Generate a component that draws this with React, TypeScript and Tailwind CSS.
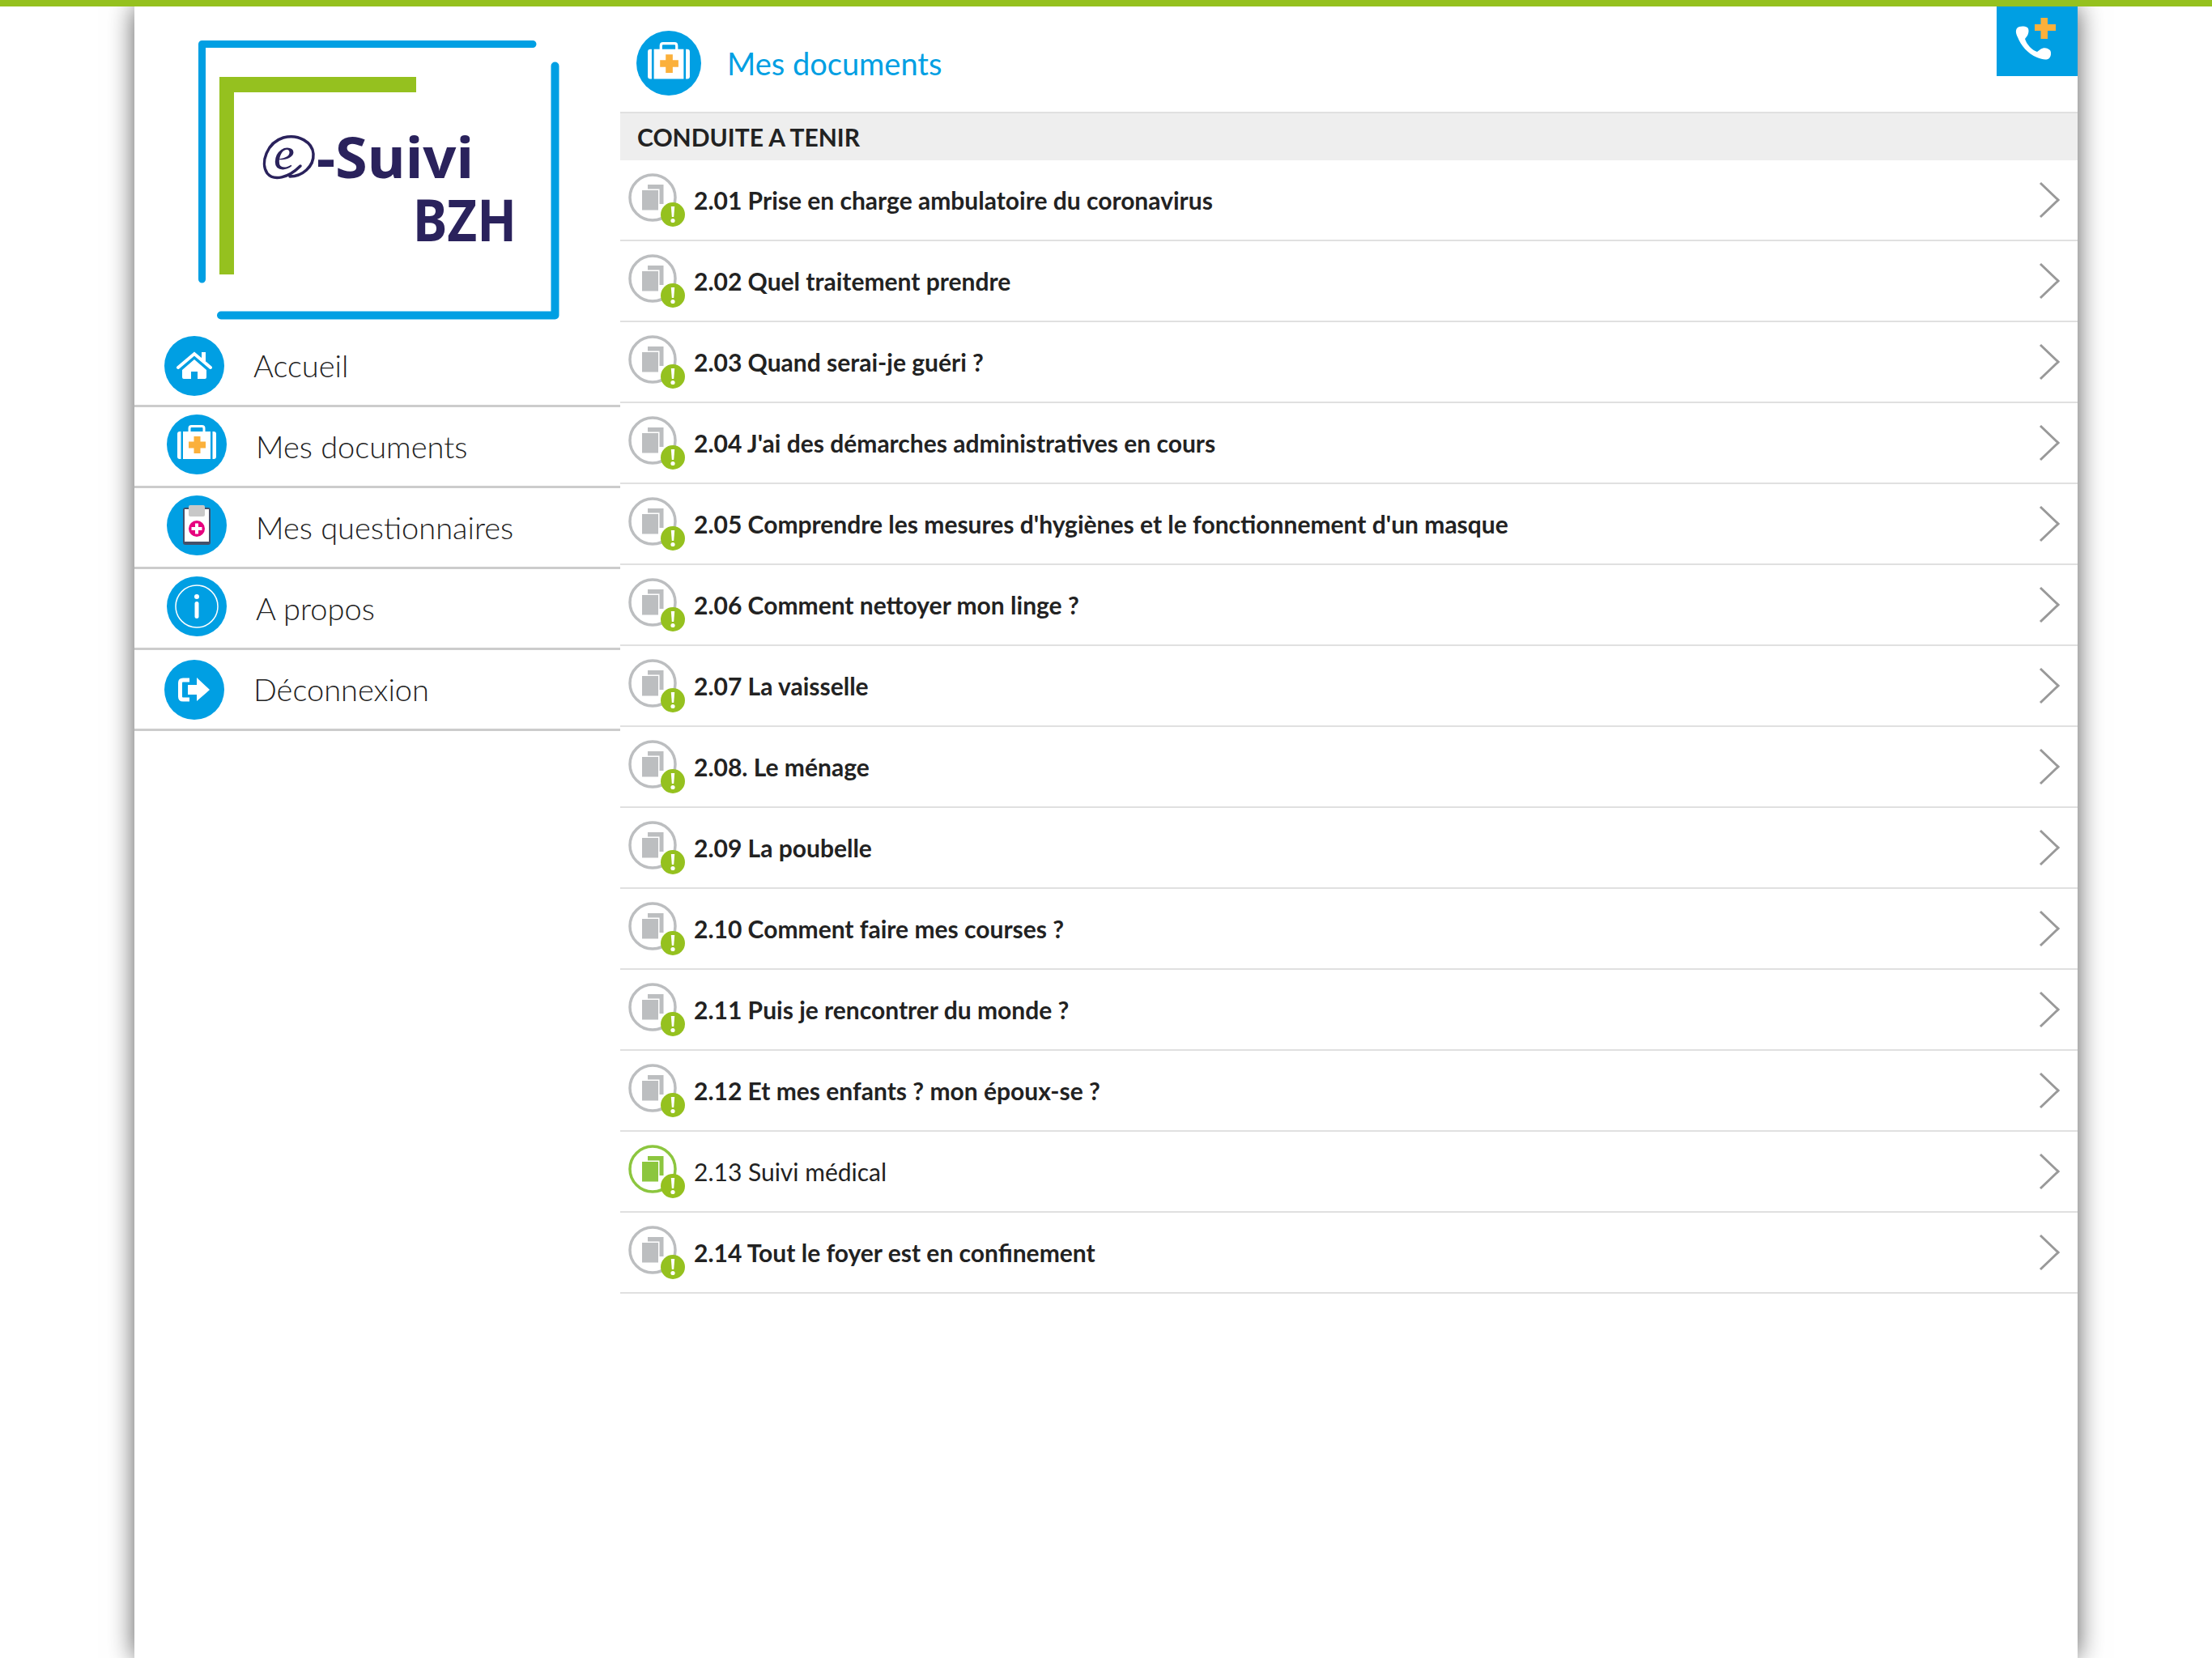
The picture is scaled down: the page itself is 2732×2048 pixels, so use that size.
const blue = "#009fe3";

const docs = [
  "2.01 Prise en charge ambulatoire du coronavirus",
  "2.02 Quel traitement prendre",
  "2.03 Quand serai-je guéri ?",
  "2.04 J'ai des démarches administratives en cours",
  "2.05 Comprendre les mesures d'hygiènes et le fonctionnement d'un masque",
  "2.06 Comment nettoyer mon linge ?",
  "2.07 La vaisselle",
  "2.08. Le ménage",
  "2.09 La poubelle",
  "2.10 Comment faire mes courses ?",
  "2.11 Puis je rencontrer du monde ?",
  "2.12 Et mes enfants ? mon époux-se ?",
  "2.13 Suivi médical",
  "2.14 Tout le foyer est en confinement",
];

function HomeIcon() {
  return (
    <svg viewBox="0 0 74 74" className="w-[74px] h-[74px] shrink-0">
      <circle cx="37" cy="37" r="37" fill={blue} />
      <path d="M17 39 L37 22 L57 39" fill="none" stroke="#fff" strokeWidth="4" strokeLinecap="round" />
      <rect x="46" y="20" width="5" height="11" fill="#fff" />
      <path d="M22 42 L37 29 L52 42 V51 Q52 53 50 53 H41 V44 H33 V53 H24 Q22 53 22 51 Z" fill="#fff" />
    </svg>
  );
}

function KitIcon({ className }: { className: string }) {
  return (
    <svg viewBox="0 0 74 74" className={className}>
      <circle cx="37" cy="37" r="37" fill={blue} />
      <path d="M28 22 V17 Q28 14.5 30.5 14.5 H43.5 Q46 14.5 46 17 V22" fill="none" stroke="#fff" strokeWidth="3" />
      <rect x="20" y="21" width="34" height="34" fill="#fff" />
      <path d="M17.5 21 V55 H16 Q13 55 13 52 V24 Q13 21 16 21 Z" fill="#fff" />
      <path d="M56.5 21 V55 H58 Q61 55 61 52 V24 Q61 21 58 21 Z" fill="#fff" />
      <path d="M33.5 27 H41.5 V33.5 H48 V41.5 H41.5 V48 H33.5 V41.5 H27 V33.5 H33.5 Z" fill="#fbb03b" />
    </svg>
  );
}

function ClipIcon() {
  return (
    <svg viewBox="0 0 74 74" className="w-[74px] h-[74px] shrink-0">
      <circle cx="37" cy="37" r="37" fill={blue} />
      <rect x="20" y="15" width="34" height="46" rx="3" fill="#44506a" />
      <rect x="22" y="17" width="30" height="40" fill="#fff" />
      <rect x="27" y="12" width="20" height="14" rx="2" fill="#c8c8c8" />
      <circle cx="37" cy="41" r="10" fill="#e6007e" />
      <path d="M35 34.5 H39 V39 H43.5 V43 H39 V47.5 H35 V43 H30.5 V39 H35 Z" fill="#fff" />
    </svg>
  );
}

function InfoIcon() {
  return (
    <svg viewBox="0 0 74 74" className="w-[74px] h-[74px] shrink-0">
      <circle cx="37" cy="37" r="37" fill={blue} />
      <circle cx="37" cy="37" r="26" fill="none" stroke="#fff" strokeWidth="1.5" />
      <circle cx="37" cy="25" r="3" fill="#fff" />
      <rect x="34.5" y="31" width="5" height="21" rx="2.5" fill="#fff" />
    </svg>
  );
}

function LogoutIcon() {
  return (
    <svg viewBox="0 0 74 74" className="w-[74px] h-[74px] shrink-0">
      <circle cx="37" cy="37" r="37" fill={blue} />
      <path d="M31 25 H23 Q19.5 25 19.5 28.5 V45.5 Q19.5 49 23 49 H31" fill="none" stroke="#fff" strokeWidth="5" />
      <path d="M29 31 H40 V22 L56 37 L40 51 V43 H29 Z" fill="#fff" />
    </svg>
  );
}

const menu = [
  { label: "Accueil", icon: <HomeIcon />, pad: "pl-[37px]", lift: "" },
  { label: "Mes documents", icon: <KitIcon className="w-[74px] h-[74px] shrink-0" />, pad: "pl-[40px]", lift: "mb-[5px]" },
  { label: "Mes questionnaires", icon: <ClipIcon />, pad: "pl-[40px]", lift: "mb-[5px]" },
  { label: "A propos", icon: <InfoIcon />, pad: "pl-[40px]", lift: "mb-[5px]" },
  { label: "Déconnexion", icon: <LogoutIcon />, pad: "pl-[37px]", lift: "" },
];

function Logo() {
  return (
    <svg viewBox="0 0 600 395" className="block w-[600px] h-[395px]">
      <path d="M83.5 337 V46.5 H492" fill="none" stroke={blue} strokeWidth="9" strokeLinecap="round" strokeLinejoin="round" />
      <path d="M519.5 73.5 V381.5 H107" fill="none" stroke={blue} strokeWidth="10" strokeLinecap="round" strokeLinejoin="round" />
      <rect x="105" y="87" width="243" height="19" fill="#95c11f" />
      <rect x="105" y="87" width="18" height="244" fill="#95c11f" />
      <path d="M205 197 C190 212 172 216 164 206 C155 193 164 168 184 162 C203 157 220 168 221 182 C222 198 207 210 192 210" fill="none" stroke="#2a225c" strokeWidth="3.5" strokeLinecap="round" />
      <text x="172" y="201" fontFamily="'Liberation Serif', serif" fontStyle="italic" fontSize="58" fill="#2a225c">e</text>
      <text x="225" y="212" fontFamily="'Noto Sans', sans-serif" fontWeight="700" fontSize="70" fill="#2a225c" textLength="194" lengthAdjust="spacingAndGlyphs">-Suivi</text>
      <text x="344" y="290" fontFamily="'Noto Sans', sans-serif" fontWeight="700" fontSize="71" fill="#2a225c" textLength="128" lengthAdjust="spacingAndGlyphs">BZH</text>
    </svg>
  );
}

function DocIcon({ active }: { active: boolean }) {
  const ring = active ? "#8cc63f" : "#bcbec0";
  return (
    <svg viewBox="0 0 70 66" className="w-[70px] h-[66px] shrink-0">
      <circle cx="30" cy="30" r="28" fill="none" stroke={ring} strokeWidth="3.5" />
      <rect x="24" y="14" width="19.5" height="24" fill={ring} />
      <rect x="15.5" y="19.5" width="23" height="27" fill="#fff" />
      <rect x="17" y="21" width="20" height="24.5" fill={ring} />
      <circle cx="55" cy="51" r="15" fill="#95c11f" />
      <path d="M52.8 41 H57.2 L56.2 54 H53.8 Z" fill="#fff" />
      <circle cx="55" cy="58.5" r="2.6" fill="#fff" />
    </svg>
  );
}

function Chevron() {
  return (
    <svg viewBox="0 0 26 46" className="w-[26px] h-[46px] shrink-0">
      <path d="M2 2 L24 23 L2 44" fill="none" stroke="#999" strokeWidth="3" />
    </svg>
  );
}

function PhoneIcon() {
  return (
    <svg viewBox="0 0 100 86" className="w-[100px] h-[86px]">
      <path d="M25 27 C28 24 34 24 38 26 C40 28 40 32 38 36 L35 40 C37 47 44 54 50 56 L54 53 C58 50 63 51 66 54 C68 57 67 62 65 64 C61 67 56 65 50 63 C38 58 30 48 26 38 C24 34 23 30 25 27 Z" fill="#fff" />
      <path d="M47 22 H54.5 V14 H63 V22 H73 V30 H63 V40 H54.5 V30 H47 Z" fill="#fbb03b" transform="translate(0 0)" />
    </svg>
  );
}

export default function App() {
  return (
    <div className="min-h-screen bg-white flex flex-col font-['Lato',sans-serif] text-[#222]">
      <div className="h-[8px] bg-[#95c11f] relative z-10"></div>
      <div className="ml-[166px] w-[2400px] flex-1 flex bg-white shadow-[0_0_30px_rgba(0,0,0,0.65)]">
        <div className="w-[600px] shrink-0">
          <Logo />
          {menu.map((m) => (
            <div key={m.label} className={"h-[100px] flex items-center gap-[36px] border-b-[3px] border-[#ccc] " + m.pad}>
              <div className={m.lift}>{m.icon}</div>
              <span className="text-[38px] font-light">{m.label}</span>
            </div>
          ))}
        </div>
        <div className="flex-1 relative">
          <div className="absolute top-0 right-0 w-[100px] h-[86px] bg-[#009fe3]">
            <PhoneIcon />
          </div>
          <div className="h-[130px] pt-[10px] pl-[20px] flex items-center gap-[32px]">
            <KitIcon className="w-[80px] h-[80px] shrink-0" />
            <span className="text-[38px] text-[#009fe3]">Mes documents</span>
          </div>
          <div className="h-[60px] border-t-2 border-[#e0e0e0] bg-[#eeeeee] pl-[21px] flex items-center text-[30px] font-bold">
            CONDUITE A TENIR
          </div>
          {docs.map((d) => {
            const active = d.startsWith("2.13");
            return (
              <div key={d} className="h-[100px] pl-[10px] pr-[22px] flex items-center gap-[11px] border-b-2 border-[#e0e0e0]">
                <DocIcon active={active} />
                <span className={"flex-1 text-[30px] " + (active ? "font-normal" : "font-bold")}>{d}</span>
                <Chevron />
              </div>
            );
          })}
        </div>
      </div>
    </div>
  );
}
